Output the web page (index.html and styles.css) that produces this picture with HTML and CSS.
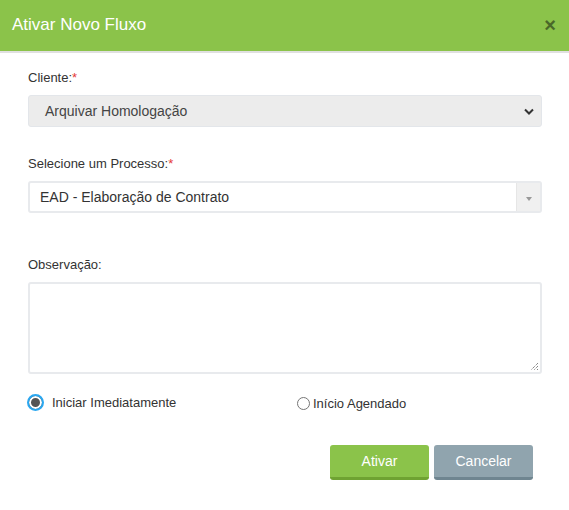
FILE: index.html
```html
<!DOCTYPE html>
<html lang="pt">
<head>
<meta charset="utf-8">
<title>Ativar Novo Fluxo</title>
<link rel="stylesheet" href="styles.css">
</head>
<body>
<div class="modal">
  <header class="modal-header">
    <h1 class="modal-title">Ativar Novo Fluxo</h1>
    <span class="close">&times;</span>
  </header>
  <div class="modal-body">
    <div class="field">
      <label class="label">Cliente:<span class="req">*</span></label>
      <div class="select-native">
        <span>Arquivar Homologação</span>
        <svg class="chev" width="10" height="7" viewBox="0 0 10 7"><path d="M1 1.5 L5 5.5 L9 1.5" fill="none" stroke="#333" stroke-width="2"/></svg>
      </div>
    </div>
    <div class="field field-proc">
      <label class="label">Selecione um Processo:<span class="req">*</span></label>
      <div class="select2">
        <span class="select2-text">EAD - Elaboração de Contrato</span>
        <span class="select2-arrow"><span class="tri"></span></span>
      </div>
    </div>
    <div class="field field-obs">
      <label class="label">Observação:</label>
      <div class="textarea">
        <svg class="grip" width="10" height="10" viewBox="0 0 10 10"><path d="M9 2 L2 9 M9 5 L5 9 M9 8 L8 9" stroke="#555" stroke-width="1" stroke-dasharray="1 1"/></svg>
      </div>
    </div>
    <div class="radios">
      <label class="radio radio-on"><span class="dot-big"></span>Iniciar Imediatamente</label>
      <label class="radio radio-off"><span class="dot-small"></span>Início Agendado</label>
    </div>
    <div class="actions">
      <button class="btn btn-green">Ativar</button>
      <button class="btn btn-gray">Cancelar</button>
    </div>
  </div>
</div>
</body>
</html>
```

FILE: styles.css
```css
* { box-sizing: border-box; }
html, body { margin: 0; padding: 0; background: #fff; }
body { font-family: "Liberation Sans", Arial, sans-serif; color: #333; }
.modal { width: 569px; height: 510px; background: #fff; }
.modal-header {
  height: 53px;
  background: #8bc34a;
  border-bottom: 2px solid #e0e0e0;
  display: flex;
  align-items: center;
  justify-content: space-between;
  padding: 0 12px 2px 12px;
}
.modal-title { margin: 0; font-size: 17px; font-weight: normal; color: #fff; }
.close { font-size: 20px; font-weight: bold; color: #3e5a24; opacity: 0.85; line-height: 1; margin-right: 1px; }
.modal-body { padding: 17px 27px 0 28px; }
.field { display: flex; flex-direction: column; }
.label { font-size: 13px; color: #333; line-height: 16px; margin-bottom: 9px; }
.req { color: #e53935; }
.select-native {
  height: 32px;
  background: #ececec;
  border: 1px solid #e3e6ea;
  border-radius: 3px;
  display: flex;
  align-items: center;
  justify-content: space-between;
  padding: 0 7px 0 16px;
  font-size: 14px;
  color: #444;
}
.field-proc { margin-top: 29px; }
.select2 {
  height: 32px;
  border: 2px solid #e8eaed;
  border-radius: 3px;
  display: flex;
  align-items: stretch;
  font-size: 14px;
  color: #333;
}
.select2-text { flex: 1; display: flex; align-items: center; padding-left: 10px; }
.select2-arrow { width: 24px; background: #f0f0f0; border-left: 1px solid #e6e6e6; display: flex; align-items: center; justify-content: center; }
.tri { width: 0; height: 0; border-left: 3px solid transparent; border-right: 3px solid transparent; border-top: 4px solid #999; margin-top: 3px; }
.field-obs { margin-top: 44px; }
.textarea {
  height: 92px;
  border: 2px solid #e8eaed;
  border-radius: 3px;
  position: relative;
}
.grip { position: absolute; right: 1px; bottom: 1px; }
.radios { display: flex; margin-top: 18px; font-size: 13px; height: 20px; align-items: center; }
.radio { display: flex; align-items: center; color: #333; }
.radio-on { margin-left: -1px; width: 270px; }
.dot-big {
  width: 17px; height: 17px; border-radius: 50%;
  border: 2px solid #2aa7f0;
  background: #555;
  box-shadow: inset 0 0 0 2px #fff;
  margin-right: 8px;
}
.radio-off { margin-top: 3px; }
.dot-small {
  width: 13px; height: 13px; border-radius: 50%;
  border: 1px solid #767676;
  background: #fff;
  margin-right: 3px;
}
.actions { display: flex; justify-content: flex-end; gap: 5px; margin-top: 33px; padding-right: 9px; }
.btn {
  width: 99px; height: 35px;
  border: none; border-radius: 3px;
  font-family: "Liberation Sans", Arial, sans-serif;
  font-size: 14px; color: #fff;
  cursor: pointer;
}
.btn-green { background: #8bc34a; border-bottom: 3px solid #6fa232; }
.btn-gray { background: #90a4ae; border-bottom: 3px solid #6f8590; }
```
